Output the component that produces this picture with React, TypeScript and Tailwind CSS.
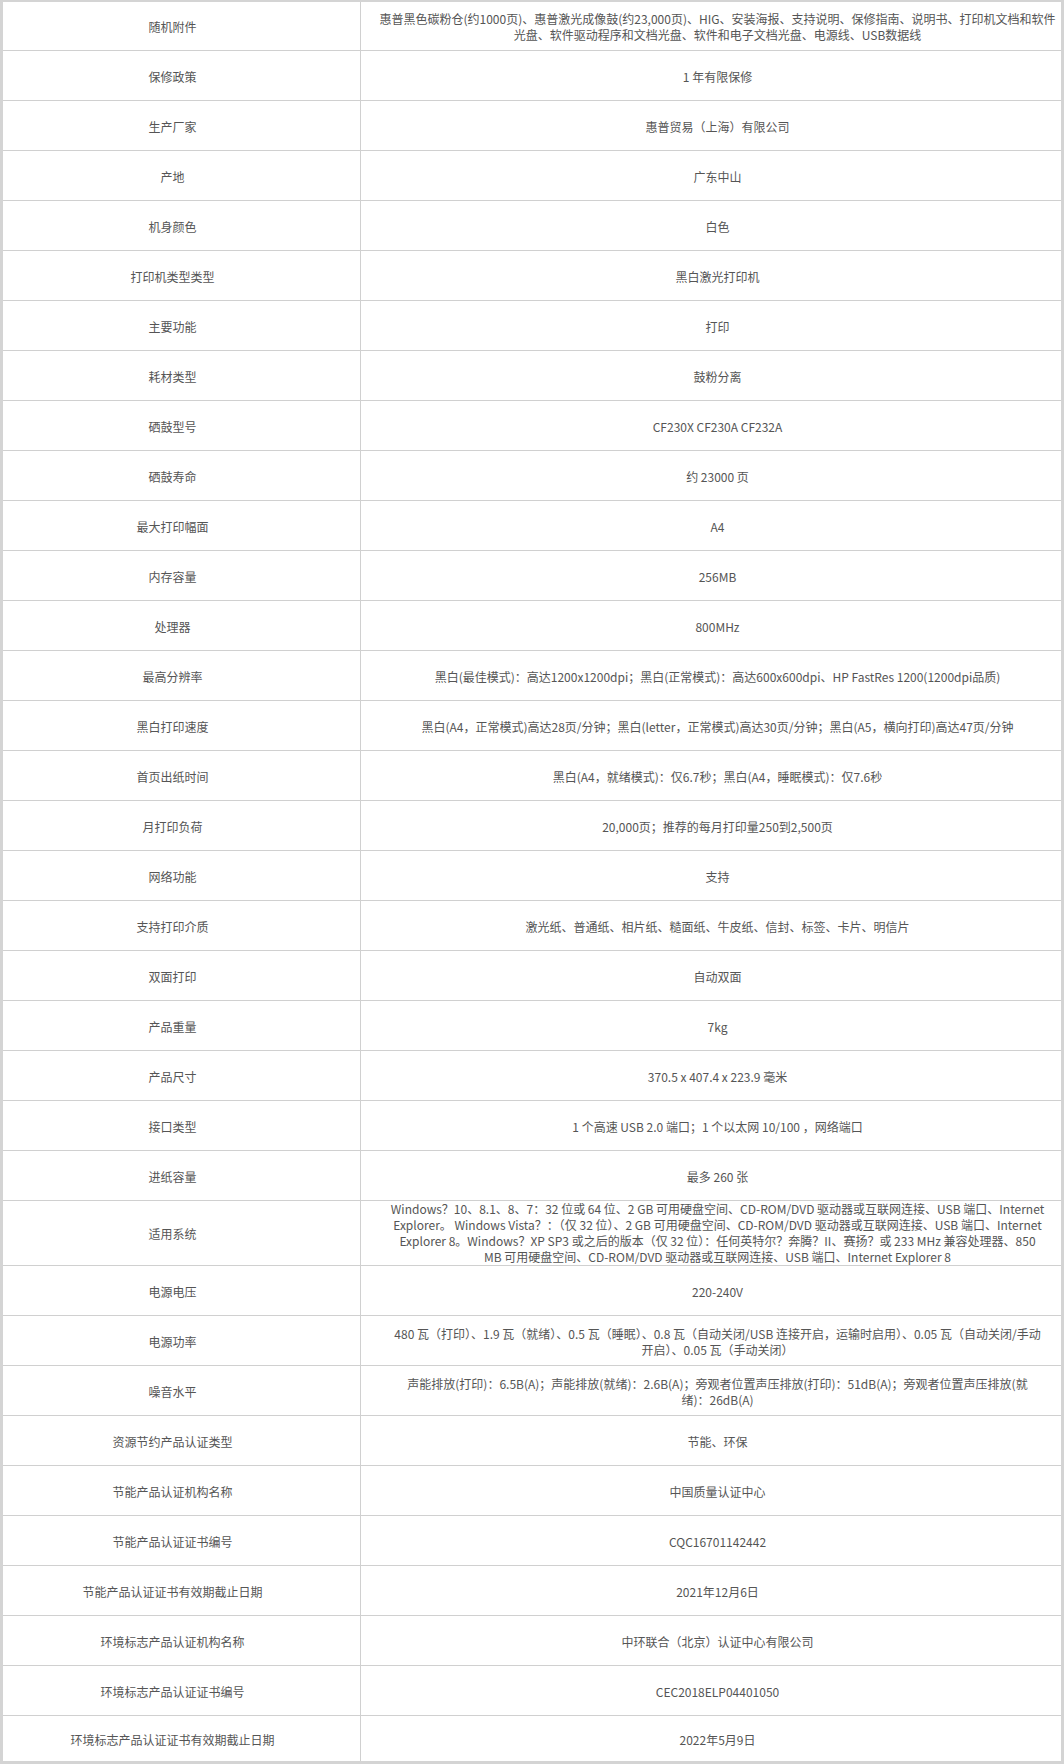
const SPECS: { label: string; value: string[] }[] = [
  {
    label: '随机附件',
    value: [
      '惠普黑色碳粉仓(约1000页)、惠普激光成像鼓(约23,000页)、HIG、安装海报、支持说明、保修指南、说明书、打印机文档和软件',
      '光盘、软件驱动程序和文档光盘、软件和电子文档光盘、电源线、USB数据线',
    ],
  },
  { label: '保修政策', value: ['1 年有限保修'] },
  { label: '生产厂家', value: ['惠普贸易（上海）有限公司'] },
  { label: '产地', value: ['广东中山'] },
  { label: '机身颜色', value: ['白色'] },
  { label: '打印机类型类型', value: ['黑白激光打印机'] },
  { label: '主要功能', value: ['打印'] },
  { label: '耗材类型', value: ['鼓粉分离'] },
  { label: '硒鼓型号', value: ['CF230X CF230A CF232A'] },
  { label: '硒鼓寿命', value: ['约 23000 页'] },
  { label: '最大打印幅面', value: ['A4'] },
  { label: '内存容量', value: ['256MB'] },
  { label: '处理器', value: ['800MHz'] },
  { label: '最高分辨率', value: ['黑白(最佳模式)：高达1200x1200dpi；黑白(正常模式)：高达600x600dpi、HP FastRes 1200(1200dpi品质)'] },
  { label: '黑白打印速度', value: ['黑白(A4，正常模式)高达28页/分钟；黑白(letter，正常模式)高达30页/分钟；黑白(A5，横向打印)高达47页/分钟'] },
  { label: '首页出纸时间', value: ['黑白(A4，就绪模式)：仅6.7秒；黑白(A4，睡眠模式)：仅7.6秒'] },
  { label: '月打印负荷', value: ['20,000页；推荐的每月打印量250到2,500页'] },
  { label: '网络功能', value: ['支持'] },
  { label: '支持打印介质', value: ['激光纸、普通纸、相片纸、糙面纸、牛皮纸、信封、标签、卡片、明信片'] },
  { label: '双面打印', value: ['自动双面'] },
  { label: '产品重量', value: ['7kg'] },
  { label: '产品尺寸', value: ['370.5 x 407.4 x 223.9 毫米'] },
  { label: '接口类型', value: ['1 个高速 USB 2.0 端口；1 个以太网 10/100 ，网络端口'] },
  { label: '进纸容量', value: ['最多 260 张'] },
  {
    label: '适用系统',
    value: [
      'Windows？10、8.1、8、7：32 位或 64 位、2 GB 可用硬盘空间、CD-ROM/DVD 驱动器或互联网连接、USB 端口、Internet',
      'Explorer。 Windows Vista？：（仅 32 位）、2 GB 可用硬盘空间、CD-ROM/DVD 驱动器或互联网连接、USB 端口、Internet',
      'Explorer 8。Windows？XP SP3 或之后的版本（仅 32 位）：任何英特尔？奔腾？II、赛扬？或 233 MHz 兼容处理器、850',
      'MB 可用硬盘空间、CD-ROM/DVD 驱动器或互联网连接、USB 端口、Internet Explorer 8',
    ],
  },
  { label: '电源电压', value: ['220-240V'] },
  {
    label: '电源功率',
    value: [
      '480 瓦（打印）、1.9 瓦（就绪）、0.5 瓦（睡眠）、0.8 瓦（自动关闭/USB 连接开启，运输时启用）、0.05 瓦（自动关闭/手动',
      '开启）、0.05 瓦（手动关闭）',
    ],
  },
  {
    label: '噪音水平',
    value: [
      '声能排放(打印)：6.5B(A)；声能排放(就绪)：2.6B(A)；旁观者位置声压排放(打印)：51dB(A)；旁观者位置声压排放(就',
      '绪)：26dB(A)',
    ],
  },
  { label: '资源节约产品认证类型', value: ['节能、环保'] },
  { label: '节能产品认证机构名称', value: ['中国质量认证中心'] },
  { label: '节能产品认证证书编号', value: ['CQC16701142442'] },
  { label: '节能产品认证证书有效期截止日期', value: ['2021年12月6日'] },
  { label: '环境标志产品认证机构名称', value: ['中环联合（北京）认证中心有限公司'] },
  { label: '环境标志产品认证证书编号', value: ['CEC2018ELP04401050'] },
  { label: '环境标志产品认证证书有效期截止日期', value: ['2022年5月9日'] },
]

export default function App() {
  return (
    <div
      className="w-[1064px] bg-white text-[12px] leading-4 text-[#555]"
      style={{ fontFamily: '"Noto Sans CJK SC", "Noto Sans", sans-serif' }}
    >
      <div className="border-t-2 border-l-[3px] border-r-[3px] border-b-[3px] border-[#d4d4d4]">
        {SPECS.map((row, i) => {
          const first = i === 0
          const last = i === SPECS.length - 1
          const tall = row.value.length > 2
          return (
            <div
              key={row.label}
              className={
                'flex ' +
                (last ? 'min-h-[45px] ' : 'border-b border-[#d0d0d0] ') +
                (first ? 'min-h-[49px]' : last ? '' : 'min-h-[50px]')
              }
            >
              <div className="flex w-[358px] shrink-0 items-center justify-center border-r border-[#d0d0d0] pr-[18px] pt-[2px]">
                {row.label}
              </div>
              <div
                className={
                  'flex flex-1 flex-col items-center justify-center pl-[13px] text-center ' +
                  (tall ? '' : 'pt-[2px]')
                }
              >
                {row.value.map((line, j) => (
                  <div key={j} className="whitespace-nowrap">
                    {line}
                  </div>
                ))}
              </div>
            </div>
          )
        })}
      </div>
    </div>
  )
}
